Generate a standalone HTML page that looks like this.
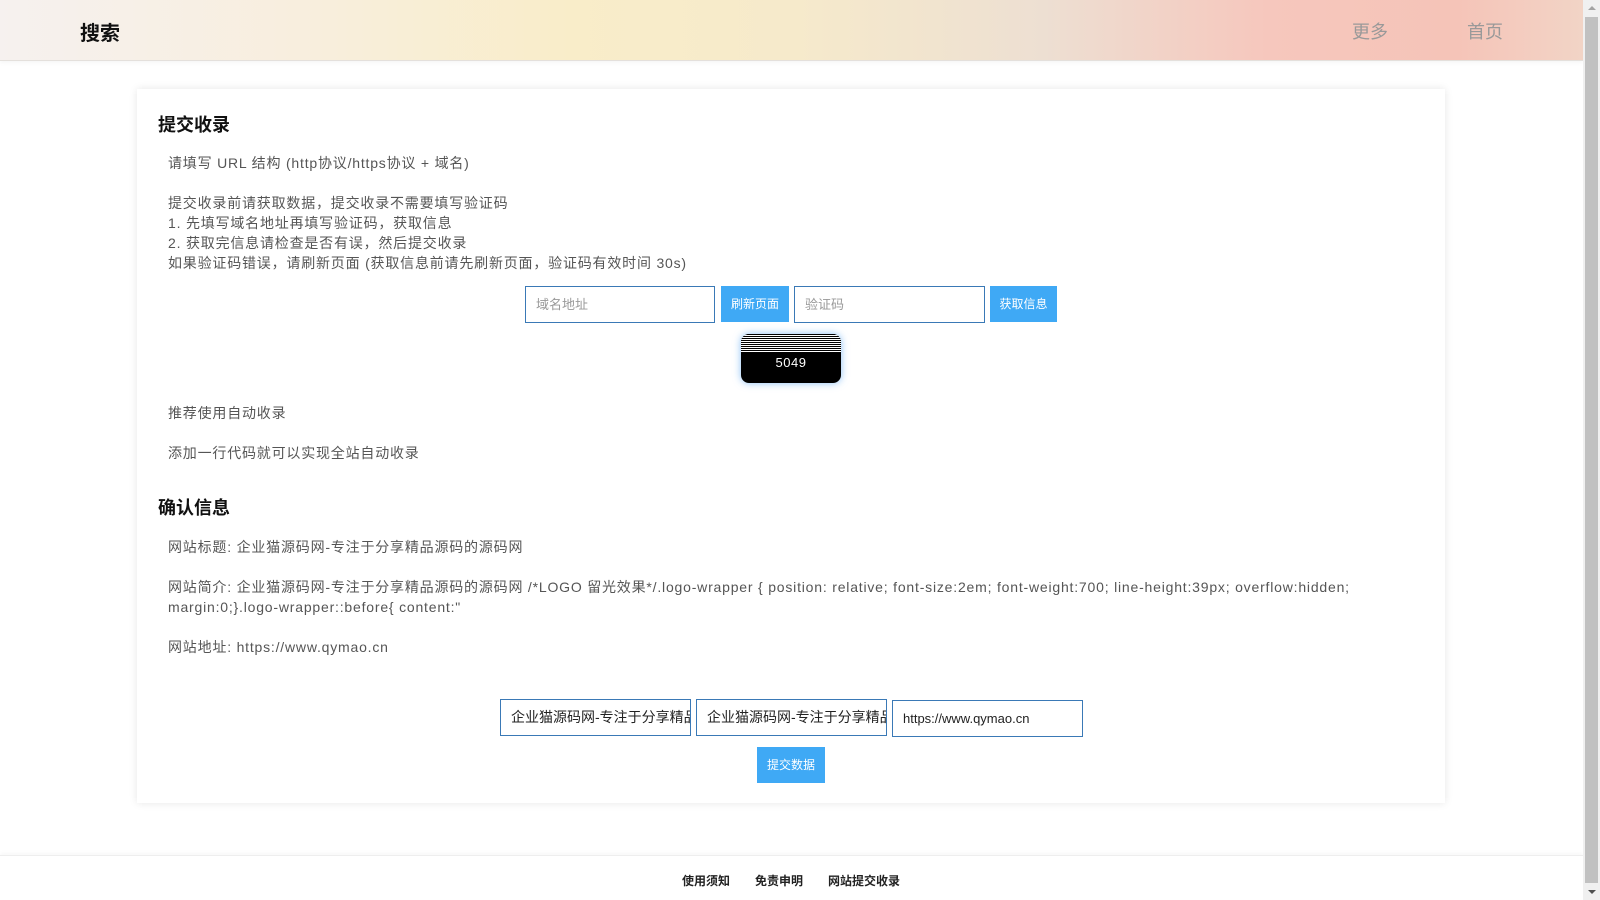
<!DOCTYPE html>
<html><head><meta charset="utf-8"><style>
*{box-sizing:border-box;margin:0;padding:0}
body{width:1600px;height:900px;overflow:hidden;background:#fff;font-family:"Liberation Sans","Noto Sans CJK SC",sans-serif;color:#333;position:relative}
.sb{position:absolute;right:0;top:0;width:17px;height:900px;background:#f0f0f0}
.sb .th{position:absolute;left:2px;right:2px;top:17px;bottom:17px;background:#c1c1c1}
.sb .a1,.sb .a2{position:absolute;left:5px;width:0;height:0;border-left:4px solid transparent;border-right:4px solid transparent}
.sb .a1{top:6px;border-bottom:4px solid #a3a3a3}
.sb .a2{bottom:6px;border-top:4px solid #505050}
.hd{position:absolute;left:0;top:0;width:1583px;height:61px;background:linear-gradient(90deg,#f6f1ef 0%,#f8eedd 20%,#f9edc9 36%,#f6eacb 50%,#eddfd2 66%,#f6c7bd 80%,#f5c4b8 92%,#f2d4c6 100%);border-bottom:1px solid #e4e0dc;box-shadow:0 2px 4px rgba(0,0,0,.04)}
.logo{position:absolute;left:80px;top:17px;font-size:20px;font-weight:bold;color:#111}
.nav{position:absolute;top:18px;font-size:18px;color:#999}
.card{position:absolute;left:137px;top:89px;width:1308px;height:714px;background:#fff;box-shadow:0 0 8px rgba(0,0,0,.1)}
.t{position:absolute;font-size:14px;color:#555;white-space:nowrap;line-height:20px;letter-spacing:.8px}
.h{position:absolute;font-size:18px;font-weight:bold;color:#111}
.in{position:absolute;height:37px;border:1px solid #3a79b6;background:#fff;font-size:13px;color:#999;padding-left:10px;line-height:35px;white-space:nowrap;overflow:hidden}
.bt{position:absolute;background:#3fa9f5;color:#fff;font-size:12px;text-align:center;line-height:36px;height:36px}
.cap{position:absolute;left:741px;top:334px;width:100px;height:49px;border-radius:8px;background:#000;box-shadow:0 0 8px rgba(60,150,240,.6);overflow:hidden}
.cap .st{height:18px;background:repeating-linear-gradient(#000 0 1px,#fff 1px 2px)}
.cap .n{color:#fff;font-size:13px;text-align:center;line-height:20px;margin-top:1px;letter-spacing:.5px}
.ft{position:absolute;left:0;top:855px;width:1583px;height:45px;border-top:1px solid #eee;box-shadow:0 -2px 4px rgba(0,0,0,.03)}
.ft span{position:absolute;top:16px;font-size:12px;font-weight:bold;color:#222}
</style></head><body>
<div class="hd"><div class="logo">搜索</div><div class="nav" style="left:1352px">更多</div><div class="nav" style="left:1467px">首页</div></div>
<div class="card"></div>
<div class="h" style="left:158px;top:111px">提交收录</div>
<div class="t" style="left:168px;top:153px">请填写 URL 结构 (http协议/https协议 + 域名)</div>
<div class="t" style="left:168px;top:193px">提交收录前请获取数据，提交收录不需要填写验证码</div>
<div class="t" style="left:168px;top:213px">1. 先填写域名地址再填写验证码，获取信息</div>
<div class="t" style="left:168px;top:233px">2. 获取完信息请检查是否有误，然后提交收录</div>
<div class="t" style="left:168px;top:253px">如果验证码错误，请刷新页面 (获取信息前请先刷新页面，验证码有效时间 30s)</div>
<div class="in" style="left:525px;top:286px;width:190px">域名地址</div>
<div class="bt" style="left:721px;top:286px;width:68px">刷新页面</div>
<div class="in" style="left:794px;top:286px;width:191px">验证码</div>
<div class="bt" style="left:990px;top:286px;width:67px">获取信息</div>
<div class="cap"><div class="st"></div><div class="n">5049</div></div>
<div class="t" style="left:168px;top:403px">推荐使用自动收录</div>
<div class="t" style="left:168px;top:443px">添加一行代码就可以实现全站自动收录</div>
<div class="h" style="left:158px;top:494px">确认信息</div>
<div class="t" style="left:168px;top:537px">网站标题: 企业猫源码网-专注于分享精品源码的源码网</div>
<div class="t" style="left:168px;top:577px">网站简介: 企业猫源码网-专注于分享精品源码的源码网 /*LOGO 留光效果*/.logo-wrapper { position: relative; font-size:2em; font-weight:700; line-height:39px; overflow:hidden;</div>
<div class="t" style="left:168px;top:597px">margin:0;}.logo-wrapper::before{ content:"</div>
<div class="t" style="left:168px;top:637px">网站地址: https://www.qymao.cn</div>
<div class="in" style="left:500px;top:699px;width:191px;color:#222;font-size:14px">企业猫源码网-专注于分享精品源码的源码网</div>
<div class="in" style="left:696px;top:699px;width:191px;color:#222;font-size:14px">企业猫源码网-专注于分享精品源码的源码网</div>
<div class="in" style="left:892px;top:700px;width:191px;color:#222;font-size:13px">https://www.qymao.cn</div>
<div class="bt" style="left:757px;top:747px;width:68px">提交数据</div>
<div class="ft"><span style="left:682px">使用须知</span><span style="left:755px">免责申明</span><span style="left:828px">网站提交收录</span></div>
<div class="sb"><div class="a1"></div><div class="th"></div><div class="a2"></div></div>
</body></html>
